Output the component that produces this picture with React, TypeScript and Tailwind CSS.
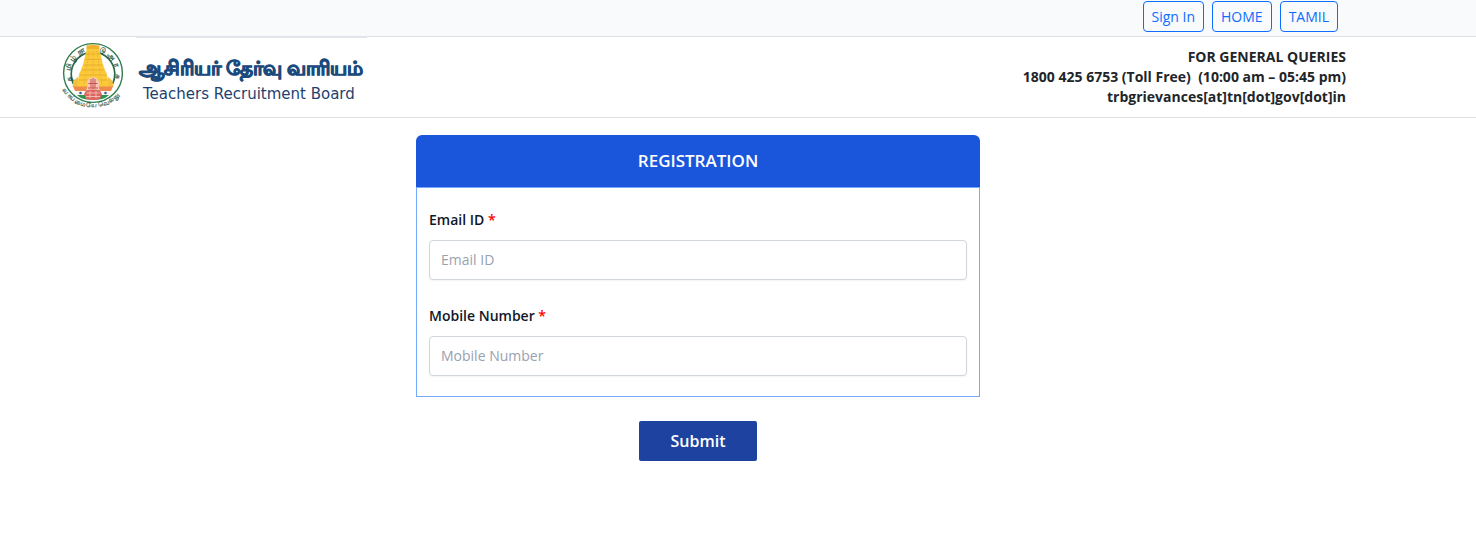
import React from "react";

const arcLetters = ["த", "மி", "ழ்", "நா", "டு", "அ", "ர", "சு"];
const arcAngles = [-103, -77, -53, -29, 24, 48, 73, 99];

function Emblem() {
  return (
    <svg viewBox="0 0 62 68" className="h-[68px] w-[62px] shrink-0 overflow-visible" role="img" aria-label="Government of Tamil Nadu emblem">
      <circle cx="31" cy="31" r="29.4" fill="#fff" stroke="#2f7d4c" strokeWidth="1.4" />
      <circle cx="31" cy="32" r="21.8" fill="#fff" stroke="#2c6b45" strokeWidth="1.7" />
      <g fill="#234a35" stroke="#234a35" strokeWidth=".2" fontSize="7.2" textAnchor="middle">
        {arcLetters.map((letter, i) => (
          <text key={letter} x="31" y="8.4" transform={`rotate(${arcAngles[i]} 31 31)`}>
            {letter}
          </text>
        ))}
      </g>
      <path d="M10.500 45l1-6 4-4 2 5h27l2-5 4 4 1 6z" fill="#f3bf3d" />
      <path d="M25 6h12l2 8 1.500 7 2.500 7 2 4 2 13H15l2-13 2-4 2.500-7 1.500-7z" fill="#fbc93a" />
      <path d="M24.500 7V4.500q1.200-2.500 2.500-.5 1.300-2.500 2.600-.5 1.400-2.500 2.800 0 1.300-2 2.600.5 1.300-2 2.500.5V7z" fill="#eeb32a" />
      <path d="M24 12h14M23 17.500h16M22 23h18M20 28h22M18 33h26M17 38h28" stroke="#e3a828" strokeWidth=".8" />
      <path d="M27 9l-5 34M35 9l5 34M31 9v25" stroke="#ecb42f" strokeWidth="1" strokeDasharray="2 1.400" />
      <path d="M11 44.500h40l-2 4.500H13z" fill="#f08a4c" />
      <path d="M13 49h36l-2 4H15z" fill="#f5f6f5" />
      <path d="M15 53h32q-4 4-10 4.500H25q-6-.5-10-4.500z" fill="#2b9350" />
      <path d="M25.500 44q-2-5 2-7.500 3.500-3 7 0 4 2.500 2 7.500l1.500 5h-14z" fill="#f2c9bf" />
      <path d="M29 37v9M31 36v11M33 37v9M26.500 41.500h9M26 46h10" stroke="#cc5148" strokeWidth="1" fill="none" />
      <path d="M24 48.500q7-2 14 0l2 4-2 4.500q-7 2-14 0l-2-4.500z" fill="#de6660" />
      <path d="M24.500 51h13M24 54.500h14M28 49v7M34 49v7" stroke="#f5cbc4" strokeWidth=".8" />
      <circle cx="18.500" cy="51" r="1.300" fill="#3f5b98" />
      <circle cx="43.500" cy="51" r="1.300" fill="#3f5b98" />
      <path id="motto-path" d="M2 50.500Q13 65 31 65.500Q49 65 60 50.500" fill="none" />
      <text fill="#234a35" stroke="#234a35" strokeWidth=".15" fontSize="6.500" textAnchor="middle">
        <textPath href="#motto-path" startOffset="50%">வாய்மையே வெல்லும்</textPath>
      </text>
    </svg>
  );
}

function NavLink({ children }: { children: React.ReactNode }) {
  return (
    <a
      href="#"
      className="rounded border border-[#0d6efd] px-2 py-1 text-sm leading-[21px] text-[#0d6efd] hover:bg-[#0d6efd] hover:text-white"
    >
      {children}
    </a>
  );
}

function Field({ id, label, type }: { id: string; label: string; type: string }) {
  return (
    <div>
      <label htmlFor={id} className="mb-2 block text-sm leading-6 font-semibold text-gray-900">
        {label} <span className="text-[#ff0000]">*</span>
      </label>
      <input
        id={id}
        type={type}
        placeholder={label}
        className="block h-10 w-full rounded border border-gray-300 bg-white px-[11px] pb-0.5 text-sm text-gray-900 shadow-xs placeholder:text-gray-400"
      />
    </div>
  );
}

export default function App() {
  return (
    <div className="bg-white font-['Segoe_UI','Open_Sans',sans-serif] text-[#212529]">
      <nav className="flex justify-end gap-2 border-b border-[#dee2e6] bg-[#f8fafc] pt-px pr-[138px] pb-1">
        <NavLink>Sign In</NavLink>
        <NavLink>HOME</NavLink>
        <NavLink>TAMIL</NavLink>
      </nav>

      <header className="flex items-start justify-between border-b border-[#dee2e6] pr-[130px] pb-[7px] pl-[62px]">
        <div className="flex items-start gap-3">
          <div className="pt-[5px]">
            <Emblem />
          </div>
          <div className="border-t border-[#e3e8ec] pt-4 pr-1 pl-[3px] text-[#1c4a7c]">
            <p className="text-xl leading-7 font-bold whitespace-nowrap [-webkit-text-stroke:1px_#1c4a7c]">
              ஆசிரியர் தேர்வு வாரியம்
            </p>
            <p className="pl-1 font-['DejaVu_Sans',sans-serif] text-[15px] leading-6 whitespace-nowrap text-[#233f70]">
              Teachers Recruitment Board
            </p>
          </div>
        </div>
        <div className="pt-[10px] text-right text-sm leading-5 font-bold">
          <p>FOR GENERAL QUERIES</p>
          <p>1800 425 6753 (Toll Free)&nbsp; (10:00 am – 05:45 pm)</p>
          <p>trbgrievances[at]tn[dot]gov[dot]in</p>
        </div>
      </header>

      <main className="flex justify-center pt-[17px] pr-20">
        <form className="w-full max-w-[564px]" onSubmit={(e) => e.preventDefault()}>
          <h1 className="rounded-t-md bg-[#1a56db] py-3 text-center text-[17px] leading-7 font-semibold text-white">
            REGISTRATION
          </h1>
          <div className="flex flex-col gap-6 border border-[#76a9fa] px-3 py-5">
            <Field id="email" label="Email ID" type="email" />
            <Field id="mobile" label="Mobile Number" type="tel" />
          </div>
          <div className="mt-6 flex justify-center">
            <button type="submit" className="h-10 rounded-xs bg-[#1e429f] px-8 text-base font-semibold text-white">
              Submit
            </button>
          </div>
        </form>
      </main>
    </div>
  );
}
